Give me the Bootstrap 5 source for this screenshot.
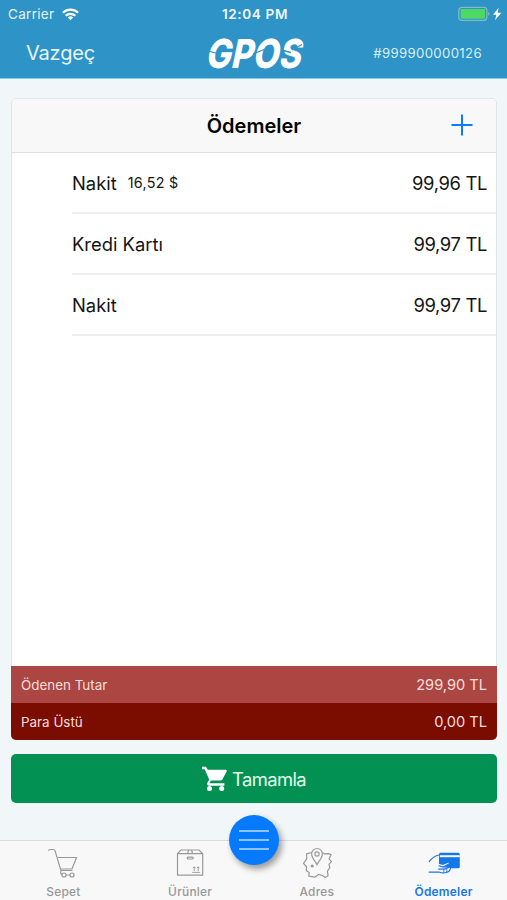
<!DOCTYPE html>
<html lang="tr">
<head>
<meta charset="utf-8">
<meta name="viewport" content="width=device-width, initial-scale=1">
<title>GPOS – Ödemeler</title>
<link href="https://cdn.jsdelivr.net/npm/bootstrap@5.3.0/dist/css/bootstrap.min.css" rel="stylesheet">
<style>
  body { font-family: Inter, "Open Sans", sans-serif; background: #f1f6f8; color: #151515; line-height: 1.2; overflow: hidden; }
  .app { height: 900px; }
  .topbar { height: 79px; background: #2e93c6; color: #fff; border-bottom: 1px solid #8cc9e4; }
  .status { height: 28px; font-size: 13.5px; padding: 0 5px 0 8px; }
  .carrier { color: #e2f3fb; letter-spacing: .3px; }
  .clock { font-size: 13.6px; font-weight: 600; letter-spacing: .6px; color: #eef9ff; }
  .titlebar { height: 50px; padding: 0 25px; }
  .cancel { font-size: 20px; color: #e6f6fc; letter-spacing: -.2px; padding-left: 1px; }
  .order { font-size: 13.2px; color: #d8eff8; letter-spacing: .35px; }
  .logo-word { font-family: Inter, sans-serif; font-weight: 800; font-size: 40px; fill: #fff; }
  .side { flex: 1 1 0; }
  .payments { margin: 19px 10px 0 11px; height: 642px; border-radius: 5px; border: 1px solid #e1e5e7; }
  .payments-head { height: 54px; background: #f8f8f8; border-bottom: 1px solid #dfdfdf; border-radius: 4px 4px 0 0; padding: 0 23px; }
  .payments-head svg { margin-bottom: 1px; }
  .payments-title { font-size: 20px; font-weight: 600; color: #050505; }
  .pay-row { height: 61px; margin-left: 60px; padding: 2px 9px 0 0; border-bottom: 2px solid #f0f0f0; font-size: 18.4px; }
  .pay-note { font-size: 14.3px; margin: 0 0 1px 11px; letter-spacing: .3px; }
  .amount { font-size: 18.4px; letter-spacing: -.35px; }
  .sum-row { height: 37px; margin: 0 -1px; padding: 1px 10px 0; color: #f9dfdc; font-size: 13.4px; }
  .sum-row .val { font-size: 14.6px; padding-top: 1px; }
  .paid { background: #ab4643; }
  .change { background: #7b0c00; border-radius: 0 0 5px 5px; margin-bottom: -1px; }
  .complete { margin: 14px 10px 0 11px; height: 49px; width: calc(100% - 21px); background: #029153; border-radius: 5px; color: #e0fbec; font-size: 18.4px; letter-spacing: -.6px; gap: 4px; padding-top: 2px; }
  .tabs { height: 60px; background: #f8f8f8; border-top: 1px solid #d9dddd; color: #979797; font-size: 11.9px; font-weight: 500; letter-spacing: .25px; }
  .tab { flex: 1 1 0; }
  .tab svg { margin-top: 6px; margin-bottom: 5.5px; }
  .tab.on { color: #1677e8; font-weight: 600; }
  .fab { left: 229px; top: -26px; width: 50px; height: 50px; background: #067aff; box-shadow: 3px 4px 6px rgba(0,0,0,.38); }
</style>
<script src="https://cdn.jsdelivr.net/npm/bootstrap@5.3.0/dist/js/bootstrap.bundle.min.js"></script>
</head>
<body>
<div class="app d-flex flex-column">
  <header class="topbar flex-shrink-0">
    <div class="status d-flex align-items-center">
      <div class="side d-flex align-items-center">
        <span class="carrier">Carrier</span>
        <svg class="ms-2" width="17" height="13" viewBox="0 0 17 13" fill="none" stroke="#fff" stroke-width="2.3"><path d="M.9 4.8a10.8 10.8 0 0 1 15.2 0M3.7 7.8a6.8 6.8 0 0 1 9.6 0"/><path d="M8.5 12.2 5.9 9.6a3.7 3.7 0 0 1 5.2 0z" fill="#fff" stroke="none"/></svg>
      </div>
      <span class="clock">12:04 PM</span>
      <div class="side d-flex align-items-center justify-content-end">
        <svg width="44" height="16" viewBox="0 0 44 16"><rect x=".8" y="1.3" width="28" height="13" rx="3" fill="none" stroke="#83b9c9" stroke-width="1.3"/><rect x="2.6" y="3" width="24.4" height="9.7" rx="1" fill="#4cd964"/><path d="M30.2 5.5q2.6 2.3 0 4.6z" fill="#83b9c9"/><path d="M40.6 1.8 35 8.8h3.4L37 14.3 43.4 6.8h-3.7z" fill="#fff"/></svg>
      </div>
    </div>
    <div class="titlebar d-flex align-items-center">
      <div class="side"><span class="cancel">Vazgeç</span></div>
      <svg width="130" height="50" viewBox="-15 -8 130 50" role="img" aria-label="GPOS">
        <g transform="translate(1 31.5) skewX(-12)"><text class="logo-word" x="0" y="0" textLength="95" lengthAdjust="spacingAndGlyphs">GPOS</text></g>
        <path d="M3 14.500 13 17.500M49 18 60 13.500M77 14 87 16.500M88 14 98 8.500" stroke="#2e93c6" stroke-width="1.300"/>
      </svg>
      <div class="side text-end"><span class="order">#999900000126</span></div>
    </div>
  </header>

  <main class="flex-grow-1">
    <section class="payments bg-white d-flex flex-column">
      <div class="payments-head d-flex align-items-center flex-shrink-0">
        <div class="side"></div>
        <span class="payments-title">Ödemeler</span>
        <div class="side d-flex justify-content-end">
          <svg width="22" height="22" viewBox="0 0 22 22" stroke="#0a7cff" stroke-width="2"><path d="M11 .5v21M.5 11h21"/></svg>
        </div>
      </div>
      <div class="flex-grow-1">
        <div class="pay-row d-flex align-items-center"><span>Nakit</span><span class="pay-note">16,52 $</span><span class="amount ms-auto">99,96 TL</span></div>
        <div class="pay-row d-flex align-items-center"><span>Kredi Kartı</span><span class="amount ms-auto">99,97 TL</span></div>
        <div class="pay-row d-flex align-items-center"><span>Nakit</span><span class="amount ms-auto">99,97 TL</span></div>
      </div>
      <div class="sum-row paid d-flex align-items-center justify-content-between"><span>Ödenen Tutar</span><span class="val">299,90 TL</span></div>
      <div class="sum-row change d-flex align-items-center justify-content-between"><span>Para Üstü</span><span class="val">0,00 TL</span></div>
    </section>
    <button type="button" class="complete border-0 d-flex align-items-center justify-content-center">
      <svg width="26" height="26" viewBox="0 0 26 26" fill="#fff"><path d="M0 .8h4l1.7 3H24q1.3.2.7 1.4l-4.3 8.2q-.7 1.1-2 1.1H8.9l-1.2 2.2q-.1.6.5.6h14.2v2.4H7.2q-2.8-.5-1.8-3l1.8-3.2L2.7 3.2H0z"/><circle cx="7.5" cy="22.6" r="2.5"/><circle cx="19.7" cy="22.6" r="2.5"/></svg>
      <span>Tamamla</span>
    </button>
  </main>

  <nav class="tabs position-relative d-flex flex-shrink-0">
    <div class="tab d-flex flex-column align-items-center">
      <svg width="32" height="32" viewBox="0 0 32 32" fill="none" stroke="#999" stroke-width="1.2"><path d="M1.5 3.8q0-1.3 1.5-1.3h3.2q1.4 0 1.9 1.4L13.9 23.5h11.6M11 10.5h18.5L25 22H13.5"/><circle cx="17" cy="28" r="2"/><circle cx="25" cy="28" r="2"/><path d="M13.900 23.800q-.8 3 1 3.800M19 28h4"/></svg>
      <span>Sepet</span>
    </div>
    <div class="tab d-flex flex-column align-items-center">
      <svg width="32" height="32" viewBox="0 0 32 32" fill="none" stroke="#999" stroke-width="1.2"><path d="M3.500 6.700h25.200v21.500H3.500zM3.500 6.700 7 3h18l3.700 3.700M13.600 6.700l1-3.700m3.900 3.700L17.600 3"/><rect x="13.200" y="10.200" width="6" height="1.800" rx=".9"/><path d="M18.200 25.400h8M20.200 24v-4.200m4 4.200v-4.200m-5.200 1.400 1.200-1.400 1.200 1.400m1.600 0 1.200-1.400 1.200 1.400" stroke-width=".9"/></svg>
      <span>Ürünler</span>
    </div>
    <div class="tab d-flex flex-column align-items-center">
      <svg width="32" height="32" viewBox="0 0 32 32" fill="none" stroke="#999" stroke-width="1.2"><path d="M10.600 5.500 5.500 6.800l.3 4.800-3.300 4.800 3.200 3.600-.5 3.400 3 2.200-.4 3.600 6.200.9 3.500-2.600 4.400 1.100 2.100 1.900 3.100-1.800-.7-4.500 2.400-3.500-.8-3.400 2.400-2.700-2.300-2.800 2-4.200-2.800-1-3.600.3-2.100-1.200" stroke-linejoin="round"/><path d="M16 17.800c-1.500-3.500-5.400-7-5.400-10.900a5.400 5.400 0 0 1 10.800 0c0 3.900-3.900 7.400-5.400 10.900z"/><circle cx="16" cy="7" r="2.100"/><circle cx="11.200" cy="19" r="1" fill="#999"/></svg>
      <span>Adres</span>
    </div>
    <div class="tab on d-flex flex-column align-items-center">
      <svg width="34" height="32" viewBox="0 0 34 32" fill="none"><path d="M13.200 5.800h18q1.600 0 1.600 1.600v12.300q0 1.600-1.600 1.600H13.200q-1.200-.4-1.200-1.600V7.400q0-1.300 1.200-1.600z" fill="#1677e8"/><path d="M12.800 9.200h20" stroke="#f8f8f8" stroke-width="2"/><path d="M11 16.800l4.500.7 6-2.400q1.800.6.8 2l-5.800 3.400 6.500-.1q1.500 1.500-.2 3.200-1.500 2.500-4.600 2.600H11z" fill="#f8f8f8"/><path d="M2.200 14.600Q6.500 9 12 8M12.500 16.300l3.600.9 5.400-2.300q1.700.6.7 1.900l-6 3.300-4.200-1.400M2.200 25.200h10.300q3.500 1.300 6.700.3 3.500-.8 3.700-2.700 1.500-2.300-.4-2.900l-4.900 2.200h-6" stroke="#1677e8" stroke-width="1.200" stroke-linecap="round" stroke-linejoin="round"/><path d="M19.500 22.200q1.200 1.500-.3 3M16.500 22.500q1 1.500 0 3" stroke="#1677e8" stroke-width=".9"/></svg>
      <span>Ödemeler</span>
    </div>
    <div class="fab position-absolute rounded-circle d-flex align-items-center justify-content-center">
      <svg width="30" height="20" viewBox="0 0 30 20" stroke="#b9dcff" stroke-width="1.600"><path d="M0 1h30M0 10h30M0 19h30"/></svg>
    </div>
  </nav>
</div>
</body>
</html>
